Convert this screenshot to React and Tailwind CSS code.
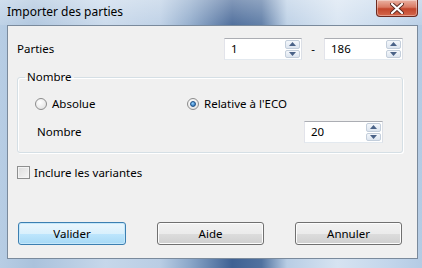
import React from "react";

function SpinBtn({ up }) {
  return (
    <div className="flex-1 flex items-center justify-center border border-[#c3cedb] rounded-[2px] bg-[linear-gradient(#f4f7fb,#dde5ef)]">
      <svg width="7" height="4" viewBox="0 0 7 4">
        {up ? <path d="M0 4 L3.5 0 L7 4 Z" fill="#4a6287" /> : <path d="M0 0 L3.5 4 L7 0 Z" fill="#4a6287" />}
      </svg>
    </div>
  );
}

function Spinner({ value, w }) {
  return (
    <div className={`${w} h-[22px] flex bg-white border border-[#abadb3] border-l-[#e2e3ea] border-r-[#dbdfe6] border-b-[#e3e9ef]`}>
      <div className="flex-1 flex items-center pl-[6px]">{value}</div>
      <div className="w-[16px] flex flex-col gap-[1px] py-[1px] pr-[1px]">
        <SpinBtn up />
        <SpinBtn />
      </div>
    </div>
  );
}

function Radio({ checked, label }) {
  return (
    <div className="flex items-center gap-[5px]">
      <div className="w-[12px] h-[12px] rounded-full border border-[#8c8c8c] bg-[radial-gradient(circle_at_40%_35%,#ffffff,#dcdcdc)] flex items-center justify-center">
        {checked && <div className="w-[6px] h-[6px] rounded-full bg-[radial-gradient(circle_at_40%_35%,#8fd0ff,#1a5fa8)] border border-[#1d4f86]" />}
      </div>
      <span>{label}</span>
    </div>
  );
}

function Button({ label, primary }) {
  return (
    <div
      className={
        primary
          ? "w-[108px] h-[23px] rounded-[3px] border border-[#3c7fb1] flex items-center justify-center bg-[linear-gradient(#eaf6fd_0%,#d9f0fc_50%,#bee6fd_50%,#a7d9f5_100%)] shadow-[inset_0_0_0_1px_#c4e7fa]"
          : "w-[107px] h-[23px] rounded-[3px] border border-[#707070] flex items-center justify-center bg-[linear-gradient(#f2f2f2_0%,#ebebeb_50%,#dddddd_50%,#cfcfcf_100%)] shadow-[inset_0_0_0_1px_#fcfcfc]"
      }
    >
      {label}
    </div>
  );
}

export default function App() {
  return (
    <div className="w-[422px] h-[268px] flex flex-col text-black font-['Noto_Sans',sans-serif] text-[11.5px] leading-none bg-[linear-gradient(90deg,#b7cde4_0%,#aac2dc_8%,#c6d7ea_25%,#b9cde4_38%,#8ba7c9_45%,#3f6193_55%,#51729f_62%,#b8cde4_68%,#d6e3f1_80%,#c3d6eb_92%,#b4cbe4_100%)]">
      <div className="h-[25px] flex items-start justify-between pl-[7px] pr-[4px] bg-[linear-gradient(rgba(255,255,255,0.35),rgba(255,255,255,0.1))]">
        <div className="pt-[6px] text-[12px]">Importer des parties</div>
        <div className="w-[42px] h-[17px] rounded-b-[4px] border border-t-0 border-[#6d2a20] bg-[linear-gradient(#eab2a3_0%,#d97a63_45%,#c2462c_55%,#d5684c_100%)] flex items-center justify-center shadow-[inset_0_0_0_1px_rgba(255,255,255,0.35)]">
          <svg width="14" height="11" viewBox="0 0 14 11">
            <path d="M2 1 L12 10 M12 1 L2 10" stroke="#5a2a22" strokeWidth="4" strokeLinecap="round" />
            <path d="M2 1 L12 10 M12 1 L2 10" stroke="#ffffff" strokeWidth="2.2" strokeLinecap="round" />
          </svg>
        </div>
      </div>
      <div className="ml-[7px] mr-[4px] h-[234px] border border-[#7a8a9c] bg-[#f0f0f0] flex flex-col pl-[9px] pr-[14px] pt-[12px]">
        <div className="h-[22px] flex items-center">
          <div className="flex-1">Parties</div>
          <Spinner value="1" w="w-[78px]" />
          <div className="w-[22px] text-center">-</div>
          <Spinner value="186" w="w-[79px]" />
        </div>
        <fieldset className="mt-[10px] h-[83px] border border-[#d5dfe5] rounded-[3px] px-[17px] shadow-[inset_1px_1px_0_#ffffff,1px_1px_0_#ffffff]">
          <legend className="ml-[-10px] px-[2px] leading-[14px]">Nombre</legend>
          <div className="h-[12px] mt-[14px] flex items-center">
            <div className="w-[152px]"><Radio label="Absolue" /></div>
            <Radio checked label="Relative à l'ECO" />
          </div>
          <div className="mt-[11px] h-[22px] flex items-center pl-[2px] pr-[2px]">
            <div className="flex-1">Nombre</div>
            <Spinner value="20" w="w-[79px]" />
          </div>
        </fieldset>
        <div className="mt-[13px] flex items-center gap-[4px]">
          <div className="w-[13px] h-[13px] border border-[#8e8f8f] bg-[linear-gradient(135deg,#dcdcdc,#f6f6f6)] shadow-[inset_0_0_0_1px_#f4f4f4]" />
          <span>Inclure les variantes</span>
        </div>
        <div className="mt-[43px] flex items-center justify-between pl-[1px] pr-[1px]">
          <Button label="Valider" primary />
          <Button label="Aide" />
          <Button label="Annuler" />
        </div>
      </div>
    </div>
  );
}
